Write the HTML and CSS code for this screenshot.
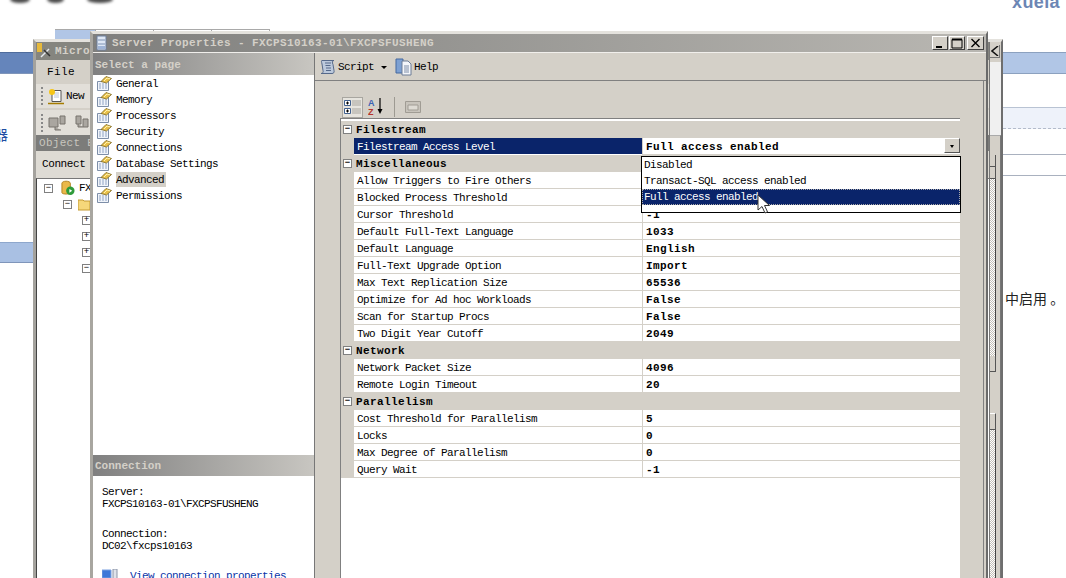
FILE: index.html
```html
<!DOCTYPE html>
<html lang="en">
<head>
<meta charset="utf-8">
<title>Server Properties</title>
<link rel="stylesheet" href="styles.css">
</head>
<body>
<svg class="defs" width="0" height="0" aria-hidden="true">
  <defs>
    <symbol id="page" viewBox="0 0 16 16">
      <path d="M1.500 6.500h11v9h-11z" fill="#f0f4fa" stroke="#7d8ea8"/>
      <path d="M3 9h8M3 11h8M3 13h8" stroke="#8fa3c4" stroke-dasharray="2 1"/>
      <path d="M5 6.500 10 1.500l5.500 2-5 4.500z" fill="#e9c04a" stroke="#7a6420" stroke-width=".8"/>
      <path d="M8 6l3-3 3 .8" stroke="#fff3b0" fill="none"/>
    </symbol>
  </defs>
</svg>

<div class="backdrop">
  <div class="logo-smudges"><i></i><i></i><i></i></div>
  <div class="back-left">
    <div class="band band-dark"></div>
    <div class="cut-glyph">器</div>
    <div class="band band-light"></div>
  </div>
  <div class="back-right">
    <div class="brand">xuela</div>
    <div class="band band-pale"></div>
    <div class="note-row note-tint"></div>
    <div class="note-row note-a"></div>
    <div class="note-row note-b"></div>
    <div class="note-text">中启用 。</div>
  </div>
</div>

<div class="tabstrip"><span class="tab tab-on"></span><span class="tab"></span><span class="tab"></span><span class="tab"></span></div>

<section class="win win-back">
  <div class="back-main">
    <div class="back-title">
      <svg width="16" height="16" viewBox="0 0 16 16"><path d="M1 0h5v9H1z" fill="#e6b93c"/><path d="M5 14 13 6" stroke="#e8ecf0" stroke-width="1.500"/><path d="M8 7l6 6" stroke="#333" stroke-width="1.500"/></svg>
      <span>Micro</span>
    </div>
    <div class="back-menu">File</div>
    <div class="back-tool">
      <i class="grip"></i>
      <svg width="16" height="17" viewBox="0 0 16 17"><path d="M4 2.500h9v11H4z" fill="#fff" stroke="#555"/><path d="M6 5h5M6 7h5M6 9h5" stroke="#b8c4d8"/><circle cx="4" cy="4" r="3" fill="#f5c518"/><path d="M0 15.500h16" stroke="#a67c00" stroke-width="1.500"/></svg>
      <span>New</span>
    </div>
    <div class="back-tool back-tool-2">
      <i class="grip"></i>
      <svg width="46" height="18" viewBox="0 0 46 18"><path d="M1 4h9v9H1zM12 2h5v8h-5zM7 13v3h6M28 2h5v8h-5zM35 5h5v8h-5zM30 10v3h5" fill="#aaa6a0" stroke="#77736c"/></svg>
    </div>
    <div class="oe-head">Object E</div>
    <div class="oe-bar">Connect</div>
    <div class="tree">
      <div class="node lv0">
        <i class="box">−</i>
        <svg width="14" height="16" viewBox="0 0 15 16"><path d="M1 3c0-3 9-3 9 0v10c0 2-9 2-9 0z" fill="#eab84a" stroke="#b0801c"/><circle cx="10" cy="11" r="4.500" fill="#2f9b3a"/><path d="M9 9l3 2-3 2z" fill="#fff"/></svg>
        <span>FX</span>
      </div>
      <div class="node lv1">
        <i class="box">−</i>
        <svg width="12" height="14" viewBox="0 0 12 14"><path d="M0 3h5l1 1h6v9H0z" fill="#f5d77a" stroke="#c49a32"/></svg>
      </div>
      <div class="node lv2"><i class="box">+</i></div>
      <div class="node lv2"><i class="box">+</i></div>
      <div class="node lv2"><i class="box">+</i></div>
      <div class="node lv2"><i class="box">−</i></div>
    </div>
  </div>
  <div class="back-side">
    <div class="side-top"><span class="side-close"><svg width="8" height="10" viewBox="0 0 8 10"><path d="M7 0 1 5l6 5" fill="none" stroke="#111" stroke-width="1.500"/></svg></span></div>
    <div class="side-pale"></div>
    <div class="side-scroll">
      <div class="sb-head"></div>
      <div class="sb-head"></div>
      <div class="sb-track sb-track-a"></div>
      <div class="sb-btn"></div>
      <div class="sb-gap"></div>
      <div class="sb-head sb-head-2"></div>
      <div class="sb-track"></div>
    </div>
  </div>
</section>

<section class="win win-front">
  <header class="title">
    <svg width="11" height="16" viewBox="0 0 11 16"><path d="M1 1h9v14H1z" fill="#dfe8f5" stroke="#6c7f9c"/><path d="M2 5h7M2 9h7" stroke="#7f93b3"/><path d="M2 11h7v3H2z" fill="#9fb4d6"/></svg>
    <span class="title-text">Server Properties - FXCPS10163-01\FXCPSFUSHENG</span>
    <div class="caption">
      <button class="cap"><svg width="10" height="10" viewBox="0 0 10 10"><path d="M1 8h6v2H1z" fill="#000"/></svg></button>
      <button class="cap"><svg width="12" height="11" viewBox="0 0 12 11"><path d="M1 1.500h10V10H1z" fill="none" stroke="#000"/><path d="M1 1.500h10" stroke="#000" stroke-width="2"/></svg></button>
      <button class="cap"><svg width="11" height="10" viewBox="0 0 11 10"><path d="M1.500 1l8 8M9.500 1l-8 8" stroke="#000" stroke-width="1.400"/></svg></button>
    </div>
  </header>
  <div class="body">
    <aside class="nav">
      <h2 class="nav-head">Select a page</h2>
      <ul class="pages">
        <li><svg class="ico"><use href="#page"/></svg><span>General</span></li>
        <li><svg class="ico"><use href="#page"/></svg><span>Memory</span></li>
        <li><svg class="ico"><use href="#page"/></svg><span>Processors</span></li>
        <li><svg class="ico"><use href="#page"/></svg><span>Security</span></li>
        <li><svg class="ico"><use href="#page"/></svg><span>Connections</span></li>
        <li><svg class="ico"><use href="#page"/></svg><span>Database Settings</span></li>
        <li class="on"><svg class="ico"><use href="#page"/></svg><span>Advanced</span></li>
        <li><svg class="ico"><use href="#page"/></svg><span>Permissions</span></li>
      </ul>
      <h2 class="nav-head conn-head">Connection</h2>
      <div class="conn">
        <p>Server:<br>FXCPS10163-01\FXCPSFUSHENG</p>
        <p>Connection:<br>DC02\fxcps10163</p>
        <div class="conn-link">
          <svg width="16" height="12" viewBox="0 0 16 12"><path d="M0 1h9v8H0z" fill="#3f78d8" stroke="#7aa0e0"/><path d="M11 0h4v10h-4z" fill="#dfe3ea" stroke="#8a94a8"/><path d="M1 10h8" stroke="#7aa0e0" stroke-width="2"/></svg>
          <a>View connection properties</a>
        </div>
      </div>
    </aside>
    <main class="pane">
      <div class="toolbar">
        <span class="tbtn">
          <svg width="18" height="18" viewBox="0 0 18 18"><path d="M3 2.500h12c-2 0-2 2-1 4l1 6c.5 2-.5 3-2 3H2c2 0 2.500-1.500 2-3L3 6C2.500 4 2 2.500 3 2.500z" fill="#bcc9dc" stroke="#56698a"/><path d="M6 5h6M6.500 7.500h5M7 10h5M7 12.500h5" stroke="#56698a"/></svg>
          <span>Script</span>
          <i class="caret"></i>
        </span>
        <span class="tbtn tbtn-help">
          <svg width="17" height="18" viewBox="0 0 17 18"><path d="M1 1h7v14H1z" fill="#7da0d2" stroke="#45699f"/><path d="M7 3h6l3 3v11H7z" fill="#f4f6fa" stroke="#6d7d96"/><path d="M9 8h5M9 10h5M9 12h5M9 14h5" stroke="#7f8ea8"/></svg>
          <span>Help</span>
        </span>
      </div>
      <div class="content">
        <div class="gridbar">
          <span class="gb gb-on"><svg width="18" height="16" viewBox="0 0 18 16"><path d="M.5 1.500h6v5h-6zM.5 9.500h6v5h-6z" fill="#fff" stroke="#41618f"/><path d="M2 4h3M3.500 2.500v3M2 12h3M3.500 10.500v3" stroke="#000"/><path d="M8 2h9M8 4h9M8 6h9M8 10h9M8 12h9M8 14h9" stroke="#a9a69f"/></svg></span>
          <span class="gb"><svg width="18" height="20" viewBox="0 0 18 20"><text x="0" y="9" class="az az-a">A</text><text x="0" y="18" class="az az-z">Z</text><path d="M12 1v14" stroke="#000" stroke-width="1.200"/><path d="M9.500 12l2.500 5 2.500-5z" fill="#000"/></svg></span>
          <i class="gb-sep"></i>
          <span class="gb"><svg width="16" height="16" viewBox="0 0 16 16"><path d="M.5 2.500h15v11H.5z" fill="#c8c4bc" stroke="#a09c94"/><path d="M3 6h10v5H3z" fill="#dedbd4" stroke="#a09c94"/></svg></span>
        </div>
        <div class="grid">
          <div class="cat"><i class="box">−</i><span>Filestream</span></div>
          <div class="row sel"><span class="n">Filestream Access Level</span><span class="v">Full access enabled<b class="drop"><i></i></b></span></div>
          <div class="cat"><i class="box">−</i><span>Miscellaneous</span></div>
          <div class="row"><span class="n">Allow Triggers to Fire Others</span><span class="v"></span></div>
          <div class="row"><span class="n">Blocked Process Threshold</span><span class="v"></span></div>
          <div class="row"><span class="n">Cursor Threshold</span><span class="v">-1</span></div>
          <div class="row"><span class="n">Default Full-Text Language</span><span class="v">1033</span></div>
          <div class="row"><span class="n">Default Language</span><span class="v">English</span></div>
          <div class="row"><span class="n">Full-Text Upgrade Option</span><span class="v">Import</span></div>
          <div class="row"><span class="n">Max Text Replication Size</span><span class="v">65536</span></div>
          <div class="row"><span class="n">Optimize for Ad hoc Workloads</span><span class="v">False</span></div>
          <div class="row"><span class="n">Scan for Startup Procs</span><span class="v">False</span></div>
          <div class="row"><span class="n">Two Digit Year Cutoff</span><span class="v">2049</span></div>
          <div class="cat"><i class="box">−</i><span>Network</span></div>
          <div class="row"><span class="n">Network Packet Size</span><span class="v">4096</span></div>
          <div class="row"><span class="n">Remote Login Timeout</span><span class="v">20</span></div>
          <div class="cat"><i class="box">−</i><span>Parallelism</span></div>
          <div class="row"><span class="n">Cost Threshold for Parallelism</span><span class="v">5</span></div>
          <div class="row"><span class="n">Locks</span><span class="v">0</span></div>
          <div class="row"><span class="n">Max Degree of Parallelism</span><span class="v">0</span></div>
          <div class="row"><span class="n">Query Wait</span><span class="v">-1</span></div>
        </div>
        <div class="listbox">
          <div class="opt">Disabled</div>
          <div class="opt">Transact-SQL access enabled</div>
          <div class="opt opt-on">Full access enabled</div>
        </div>
        <svg class="cursor" width="14" height="20" viewBox="0 0 14 20"><path d="M1 1v15l4-3.500 3 6.500 2.500-1.200-3-6.300h5z" fill="#fff" stroke="#333" stroke-width="1"/></svg>
      </div>
    </main>
  </div>
</section>
</body>
</html>
```
FILE: styles.css
```css
html, body { margin: 0; height: 100%; }
body {
  position: relative;
  width: 1066px;
  height: 578px;
  overflow: hidden;
  background: #fff;
  color: #000;
  font: 11px/12px "Liberation Mono", "Noto Sans CJK SC", monospace;
  letter-spacing: -.6px;
}
.defs { position: absolute; }
h2, p, ul { margin: 0; padding: 0; }
i, b { font-style: normal; }

/* page behind the windows */
.backdrop { display: flex; justify-content: space-between; height: 578px; }
.back-left { width: 33px; display: flex; flex-direction: column; overflow: hidden; padding-top: 52px; box-sizing: border-box; }
.back-right { width: 63px; display: flex; flex-direction: column; }
.logo-smudges { position: absolute; left: 0; top: 0; width: 120px; height: 6px; overflow: hidden; }
.logo-smudges i { position: absolute; top: -4px; height: 7px; background: #4a4a4a; filter: blur(1.500px); border-radius: 50%; }
.logo-smudges i:nth-child(1) { left: 10px; width: 20px; }
.logo-smudges i:nth-child(2) { left: 47px; width: 17px; }
.logo-smudges i:nth-child(3) { left: 87px; width: 26px; }
.band { height: 22px; box-sizing: border-box; }
.band-dark { background: #6585bb; border-top: 1px solid #4f6c9c; border-bottom: 1px solid #7f95ba; }
.band-light { height: 21px; background: #a9c0e3; border-top: 1px solid #8ea7cc; border-bottom: 1px solid #7f95ba; margin-top: 100px; }
.cut-glyph { margin: 52px 0 0 -6px; height: 16px; font: 14px/16px "Noto Sans CJK SC", sans-serif; color: #1f4ea3; letter-spacing: 0; }
.brand { height: 52px; padding: 0 0 0 9px; margin-top: -8px; margin-bottom: 8px; font: bold 18px/20px "Liberation Sans", sans-serif; color: #6c86b4; letter-spacing: .4px; box-sizing: border-box; height: 52px; }
.band-pale { background: #b1c6e6; border-top: 1px solid #8ca1bf; border-bottom: 1px solid #8ca1bf; }
.note-row { box-sizing: border-box; }
.note-tint { height: 22px; margin-top: 33px; background: #eef2fa; border-top: 1px solid #b9c3d3; border-bottom: 1px dashed #b4bccb; }
.note-a { height: 26px; border-bottom: 1px solid #a9b1bf; }
.note-b { height: 21px; border-bottom: 1px solid #a9b1bf; }
.note-text { margin: 113px 0 0 2px; font: 14px/18px "Noto Sans CJK SC", sans-serif; letter-spacing: 0; color: #222; }

.tabstrip { position: absolute; left: 55px; top: 29px; display: flex; height: 11px; border-top: 1px solid #a9a9a9; }
.tab { width: 57px; border-right: 1px solid #a9a9a9; }
.tab-on { width: 40px; background: #b1c6e6; }

/* windows on the desktop */
.win { position: absolute; box-sizing: border-box; background: #d4d0c8; }
.win-back { left: 33px; top: 39px; width: 970px; height: 539px; display: flex; border: 3px solid #d4d0c8; border-top-color: #e4e2dd; border-left-color: #a4a29d; border-right: 2px solid #6e6e6e; border-bottom: 0; }
.back-main { flex: 1; display: flex; flex-direction: column; min-width: 0; }
.back-title { height: 18px; flex: none; display: flex; align-items: center; gap: 3px; background: #85857f; color: #d4d0c8; font-weight: bold; letter-spacing: .4px; }
.back-menu { height: 24px; flex: none; line-height: 24px; padding-left: 11px; font-weight: normal; letter-spacing: .4px; }
.back-tool { height: 24px; flex: none; display: flex; align-items: center; gap: 2px; padding-left: 5px; background: #e2dfd9; }
.back-tool-2 { height: 25px; margin-top: 2px; }
.grip { width: 2px; height: 18px; background: repeating-linear-gradient(#888 0 2px, transparent 2px 4px); margin-right: 3px; }
.oe-head { height: 16px; flex: none; line-height: 16px; background: #7c7c7a; color: #c9c6bf; padding-left: 3px; letter-spacing: .3px; }
.oe-bar { height: 27px; flex: none; line-height: 27px; padding-left: 6px; background: #dedbd4; letter-spacing: -.4px; }
.tree { flex: 1; background: #fff; border-left: 1px solid #444; border-top: 1px solid #777; padding-top: 1px; }
.node { height: 16px; display: flex; align-items: center; gap: 4px; }
.node .box { margin-right: 4px; }
.lv0 { padding-left: 7px; }
.lv1 { padding-left: 26px; gap: 2px; }
.lv2 { padding-left: 45px; }
.box { box-sizing: border-box; width: 9px; height: 9px; flex: none; border: 1px solid #808080; background: #fff; font-size: 9px; line-height: 7px; text-align: center; letter-spacing: 0; color: #000; }

.back-side { width: 12px; flex: none; display: flex; flex-direction: column; border-left: 1px solid #777; box-sizing: border-box; }
.side-top { height: 20px; flex: none; padding-top: 3px; box-sizing: border-box; }
.side-close { display: flex; align-items: center; justify-content: center; width: 10px; height: 13px; background: #d4d0c8; border-right: 1px solid #777; border-bottom: 1px solid #777; box-sizing: border-box; }
.side-pale { height: 73px; flex: none; background: #f0f0f0; }
.side-scroll { flex: 1; min-height: 0; display: flex; flex-direction: column; padding: 19px 4px 0 0; border-right: 1px solid #777; border-top: 1px solid #aaa; }
.sb-head { height: 12px; flex: none; background: #d4d0c8; border: 1px solid #555; border-width: 0 1px 1px 0; box-sizing: border-box; }
.sb-head-2 { height: 17px; border-top: 1px solid #fff; }
.sb-track { flex: 1; background: repeating-conic-gradient(#c4c0b8 0 25%, #fff 0 50%) 0 0 / 2px 2px; border-right: 1px solid #444; }
.sb-track-a { height: 177px; flex: none; }
.sb-btn { height: 16px; flex: none; background: #d4d0c8; border: 1px solid #555; border-width: 0 1px 1px 0; box-sizing: border-box; }
.sb-gap { height: 41px; flex: none; }

.win-front { left: 90px; top: 31px; width: 898px; height: 547px; display: flex; flex-direction: column; border: 3px solid #d4d0c8; border-top-color: #e4e2dd; border-left-color: #a8a6a0; border-right: 2px solid #6a6a6a; border-bottom: 0; }
.title { height: 19px; flex: none; display: flex; align-items: center; gap: 5px; padding-left: 3px; background: linear-gradient(90deg, #7f7f7d, #b9b7b2); border-bottom: 1px solid #f1efec; box-sizing: border-box; }
.title-text { color: #d4d0c8; font-weight: bold; letter-spacing: .4px; }
.caption { margin-left: auto; display: flex; gap: 1px; padding-right: 2px; }
.cap { width: 16px; height: 14px; padding: 0; display: flex; align-items: center; justify-content: center; background: #d4d0c8; border: 1px solid; border-color: #fff #404040 #404040 #fff; }
.cap:last-child { width: 17px; margin-left: 1px; }

.body { flex: 1; display: flex; min-height: 0; }
.nav { width: 222px; flex: none; display: flex; flex-direction: column; background: #fff; border-right: 1px solid #777; box-sizing: border-box; }
.nav-head { height: 22px; flex: none; padding-left: 2px; font-size: 11px; line-height: 24px; font-weight: bold; color: #d4d0c8; letter-spacing: 0; background: linear-gradient(90deg, #808080, #c8c6c1); }
.conn-head { height: 21px; line-height: 23px; }
.pages { list-style: none; flex: 1; padding-left: 3px; }
.pages li { height: 16px; display: flex; align-items: center; gap: 4px; }
.pages .ico { width: 16px; height: 16px; flex: none; }
.pages span { height: 15px; line-height: 17px; padding-right: 2px; }
.pages .on span { background: #d4d0c8; }
.conn { height: 102px; flex: none; padding: 10px 0 0 9px; box-sizing: border-box; overflow: hidden; }
.conn p { margin-bottom: 18px; }
.conn-link { display: flex; align-items: flex-start; gap: 12px; margin-top: -1px; }
.conn-link a { color: #0a35a8; line-height: 14px; }

.pane { flex: 1; display: flex; flex-direction: column; min-width: 0; }
.toolbar { height: 28px; flex: none; display: flex; align-items: center; gap: 5px; padding-left: 4px; border-bottom: 1px solid #808080; box-sizing: border-box; }
.tbtn { display: flex; align-items: center; gap: 1px; }
.tbtn-help { gap: 2px; }
.caret { border: 3px solid transparent; border-top: 3px solid #000; border-bottom: 0; margin: 2px 3px 0 6px; width: 0; height: 0; }
.content { flex: 1; position: relative; margin-right: 2px; padding: 15px 23px 0 25px; border-right: 1px solid #808080; display: flex; flex-direction: column; min-height: 0; }
.gridbar { height: 22px; flex: none; display: flex; align-items: center; gap: 3px; padding-left: 2px; box-sizing: border-box; }
.gb { display: flex; align-items: center; justify-content: center; width: 21px; height: 21px; box-sizing: border-box; }
.gb-on { background: #e6e4de; border: 1px solid #a8a6a0; }
.gb-sep { width: 1px; height: 20px; background: #9d9a92; margin: 0 4px; }
.az { font: bold 9px "Liberation Sans", sans-serif; letter-spacing: 0; }
.az-a { fill: #3a62b5; }
.az-z { fill: #b5342c; }
.grid { flex: 1; background: #fff; border: 1px solid #808080; border-width: 1px 0 0 1px; padding-top: 2px; min-height: 0; }
.cat { height: 17px; display: flex; align-items: center; gap: 4px; padding-left: 2px; background: #d4d0c8; font-weight: bold; letter-spacing: .4px; box-sizing: border-box; }
.row { height: 17px; display: grid; grid-template-columns: 288px 1fr; border-left: 13px solid #d4d0c8; box-sizing: border-box; }
.row .n { border-bottom: 1px solid #d4d0c8; padding-left: 3px; line-height: 18px; height: 17px; box-sizing: border-box; overflow: hidden; }
.row .v { position: relative; border-bottom: 1px solid #d4d0c8; border-left: 1px solid #d4d0c8; padding-left: 3px; font-weight: bold; letter-spacing: .4px; line-height: 18px; height: 17px; box-sizing: border-box; }
.sel .n { background: #0a246a; color: #fff; border-bottom-color: #fff; }
.drop { position: absolute; right: 0; top: 0; width: 16px; height: 15px; background: #d4d0c8; border: 1px solid; border-color: #fff #555 #555 #fff; box-sizing: border-box; }
.drop i { position: absolute; left: 5px; top: 6px; border: 2px solid transparent; border-top: 3px solid #000; border-bottom: 0; }
.listbox { position: absolute; left: 326px; top: 75px; width: 320px; height: 57px; box-sizing: border-box; background: #fff; border: 1px solid #000; }
.opt { height: 16px; line-height: 16px; padding-left: 2px; }
.opt-on { background: #0a246a; color: #fff; outline: 1px dotted #aaa; outline-offset: -1px; }
.cursor { position: absolute; left: 442px; top: 113px; }
```
